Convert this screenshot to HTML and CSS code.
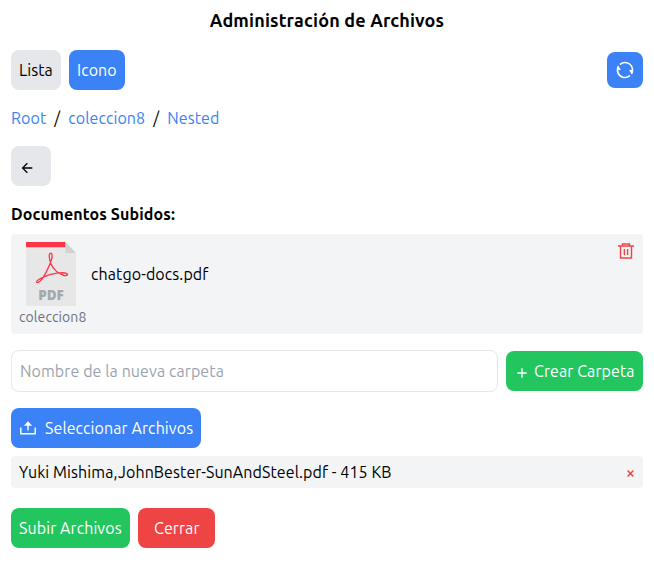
FILE: index.html
```html
<!DOCTYPE html>
<html lang="es">
<head>
<meta charset="utf-8">
<title>Administración de Archivos</title>
<link rel="stylesheet" href="styles.css">
</head>
<body>
<main class="manager">
  <h1 class="title">Administración de Archivos</h1>

  <div class="toolbar">
    <div class="views">
      <button class="btn btn-gray view-list">Lista</button>
      <button class="btn btn-blue view-icon">Icono</button>
    </div>
    <button class="btn btn-blue refresh" aria-label="Actualizar">
      <svg width="20" height="20" viewBox="0 0 24 24" fill="currentColor"><path d="M5.463 4.433A9.961 9.961 0 0 1 12 2c5.523 0 10 4.477 10 10 0 2.136-.67 4.116-1.81 5.740L17 12h3A8 8 0 0 0 6.460 6.228l-.997-1.795zm13.074 15.134A9.961 9.961 0 0 1 12 22C6.477 22 2 17.523 2 12c0-2.136.67-4.116 1.810-5.740L7 12H4a8 8 0 0 0 13.540 5.772l.997 1.795z"/></svg>
    </button>
  </div>

  <nav class="crumbs">
    <a>Root</a><span class="slash">/</span><a>coleccion8</a><span class="slash">/</span><a>Nested</a>
  </nav>

  <button class="btn btn-gray back" aria-label="Volver">
    <svg width="16" height="16" viewBox="0 0 24 24" fill="currentColor"><path d="M7.828 11H20v2H7.828l5.364 5.364-1.414 1.414L4 12l7.778-7.778 1.414 1.414z"/></svg>
  </button>

  <h2 class="subtitle">Documentos Subidos:</h2>

  <section class="card">
    <div class="doc">
      <svg class="pdf" width="50" height="64" viewBox="0 0 50 64">
        <path d="M0 0h39l11 11v53H0z" fill="#e7e7e7"/>
        <path d="M0 0h39.500v5.300H0z" fill="#ff3548"/>
        <path d="M39.500 0 50 11H39.500z" fill="#d0d3d2"/>
        <path d="M24.600 11.200c-2 .2-1.500 5.800.2 10.200 2 5 7.500 10.900 13.300 12.100 2.400.5 4.300-.8 3-1.700-3.600-2.300-15.400-.3-22.600 2.800-4.500 1.900-7.900 4.100-7.900 5.300 0 1.200 2.100.8 4.200-1.500 3.300-3.600 9.100-14.600 10.900-21.600.8-3.200.4-5.800-1.100-5.600z" fill="none" stroke="#ff3548" stroke-width="1.350"/>
        <text x="25" y="58" text-anchor="middle" class="pdf-label">PDF</text>
      </svg>
      <span class="doc-name">chatgo-docs.pdf</span>
      <button class="icon-btn" aria-label="Eliminar">
        <svg width="16" height="16" viewBox="0 0 16 16" fill="none" stroke="currentColor" stroke-width="1.400"><path d="M0 3h16M4.500 2.700V1h7v1.700M2.500 3v12h11V3M6.400 6v6.300M9.600 6v6.300"/></svg>
      </button>
    </div>
    <div class="folder">coleccion8</div>
  </section>

  <div class="create">
    <input class="field" type="text" placeholder="Nombre de la nueva carpeta">
    <button class="btn btn-green add">
      <svg width="16" height="16" viewBox="0 0 24 24" fill="currentColor"><path d="M11 11V5h2v6h6v2h-6v6h-2v-6H5v-2h6z"/></svg>
      <span>Crear Carpeta</span>
    </button>
  </div>

  <button class="btn btn-blue select">
    <svg width="16" height="14" viewBox="0 0 16 14" fill="none" stroke="currentColor" stroke-width="1.400"><path d="M.8 6.500v6.300h14.400V6.500M8 9.500V2"/><path d="M3.900 4.700 8 .2l4.100 4.500z" fill="currentColor" stroke="none"/></svg>
    <span>Seleccionar Archivos</span>
  </button>

  <div class="queued">
    <span>Yuki Mishima,JohnBester-SunAndSteel.pdf - 415 KB</span>
    <button class="remove" aria-label="Quitar"><svg width="7" height="7" viewBox="0 0 7 7" stroke="currentColor" stroke-width="1.450"><path d="m.6.600 5.800 5.800M6.400.600.6 6.400"/></svg></button>
  </div>

  <div class="actions">
    <button class="btn btn-green upload">Subir Archivos</button>
    <button class="btn btn-red close">Cerrar</button>
  </div>
</main>
</body>
</html>
```
FILE: styles.css
```css
* { box-sizing: border-box; }
body {
  margin: 0;
  background: #fff;
  color: #000;
  font: 16px/24px Ubuntu, "Noto Sans", sans-serif;
  letter-spacing: 0.09px;
}
h1, h2 { margin: 0; }
button { font: inherit; letter-spacing: inherit; border: 0; padding: 0; margin: 0; background: none; }
svg { display: block; flex: none; }
button, span, a { white-space: nowrap; }
.manager { display: flex; flex-direction: column; padding: 6px 11px 0; }
.title { font-size: 18px; line-height: 28px; font-weight: 700; text-align: center; letter-spacing: 0.16px; }
.btn { display: flex; align-items: center; height: 40px; padding: 0 8px; border-radius: 8px; }
.btn-gray { background: #e5e7eb; color: #000; }
.btn-blue { background: #3b82f6; color: #fff; }
.btn-green { background: #22c55e; color: #fff; }
.btn-red { background: #ef4444; color: #fff; }
.toolbar { display: flex; justify-content: space-between; align-items: center; margin-top: 16px; }
.views { display: flex; gap: 8px; }
.view-list { width: 50px; }
.view-icon { width: 56px; }
.refresh { width: 36px; height: 36px; }
.crumbs { display: flex; margin-top: 16px; color: #3b82f6; }
.crumbs .slash { color: #000; margin: 0 8px; }
.back { width: 40px; margin-top: 16px; padding: 4px 0 0 8px; }
.subtitle { margin-top: 16px; font-size: 16px; line-height: 24px; font-weight: 700; letter-spacing: 0.12px; }
.card { margin-top: 8px; height: 100px; padding: 8px; background: #f3f4f6; border-radius: 4px; }
.doc { display: flex; height: 64px; padding-left: 7px; }
.pdf-label { font: 800 13.5px "Open Sans", sans-serif; letter-spacing: 0; fill: #a3a9ad; }
.doc-name { flex: 1; align-self: center; margin-left: 15px; }
.icon-btn { align-self: flex-start; margin: 1px 1px 0 0; color: #ef4444; }
.folder { font-size: 14px; line-height: 20px; margin-top: 1px; color: #6b7280; }
.create { display: flex; align-items: center; gap: 8px; margin-top: 16px; }
.field { flex: 1; min-width: 0; height: 42px; padding: 0 8px; border: 1px solid #e5e7eb; border-radius: 8px; font: inherit; letter-spacing: inherit; background: #fff; }
.field::placeholder { color: #9ca3af; opacity: 1; }
.add { width: 137px; gap: 4px; }
.add svg { margin-top: 4px; }
.select { width: 190px; margin-top: 16px; padding-left: 9px; gap: 9px; }
.queued { display: flex; justify-content: space-between; align-items: center; height: 32px; margin-top: 8px; padding: 0 9px 0 8px; background: #f3f4f6; border-radius: 4px; }
.remove { color: #ef4444; margin-top: 2px; }
.actions { display: flex; gap: 8px; margin-top: 20px; }
.upload { width: 119px; }
.close { width: 77px; padding-left: 16px; }
```
